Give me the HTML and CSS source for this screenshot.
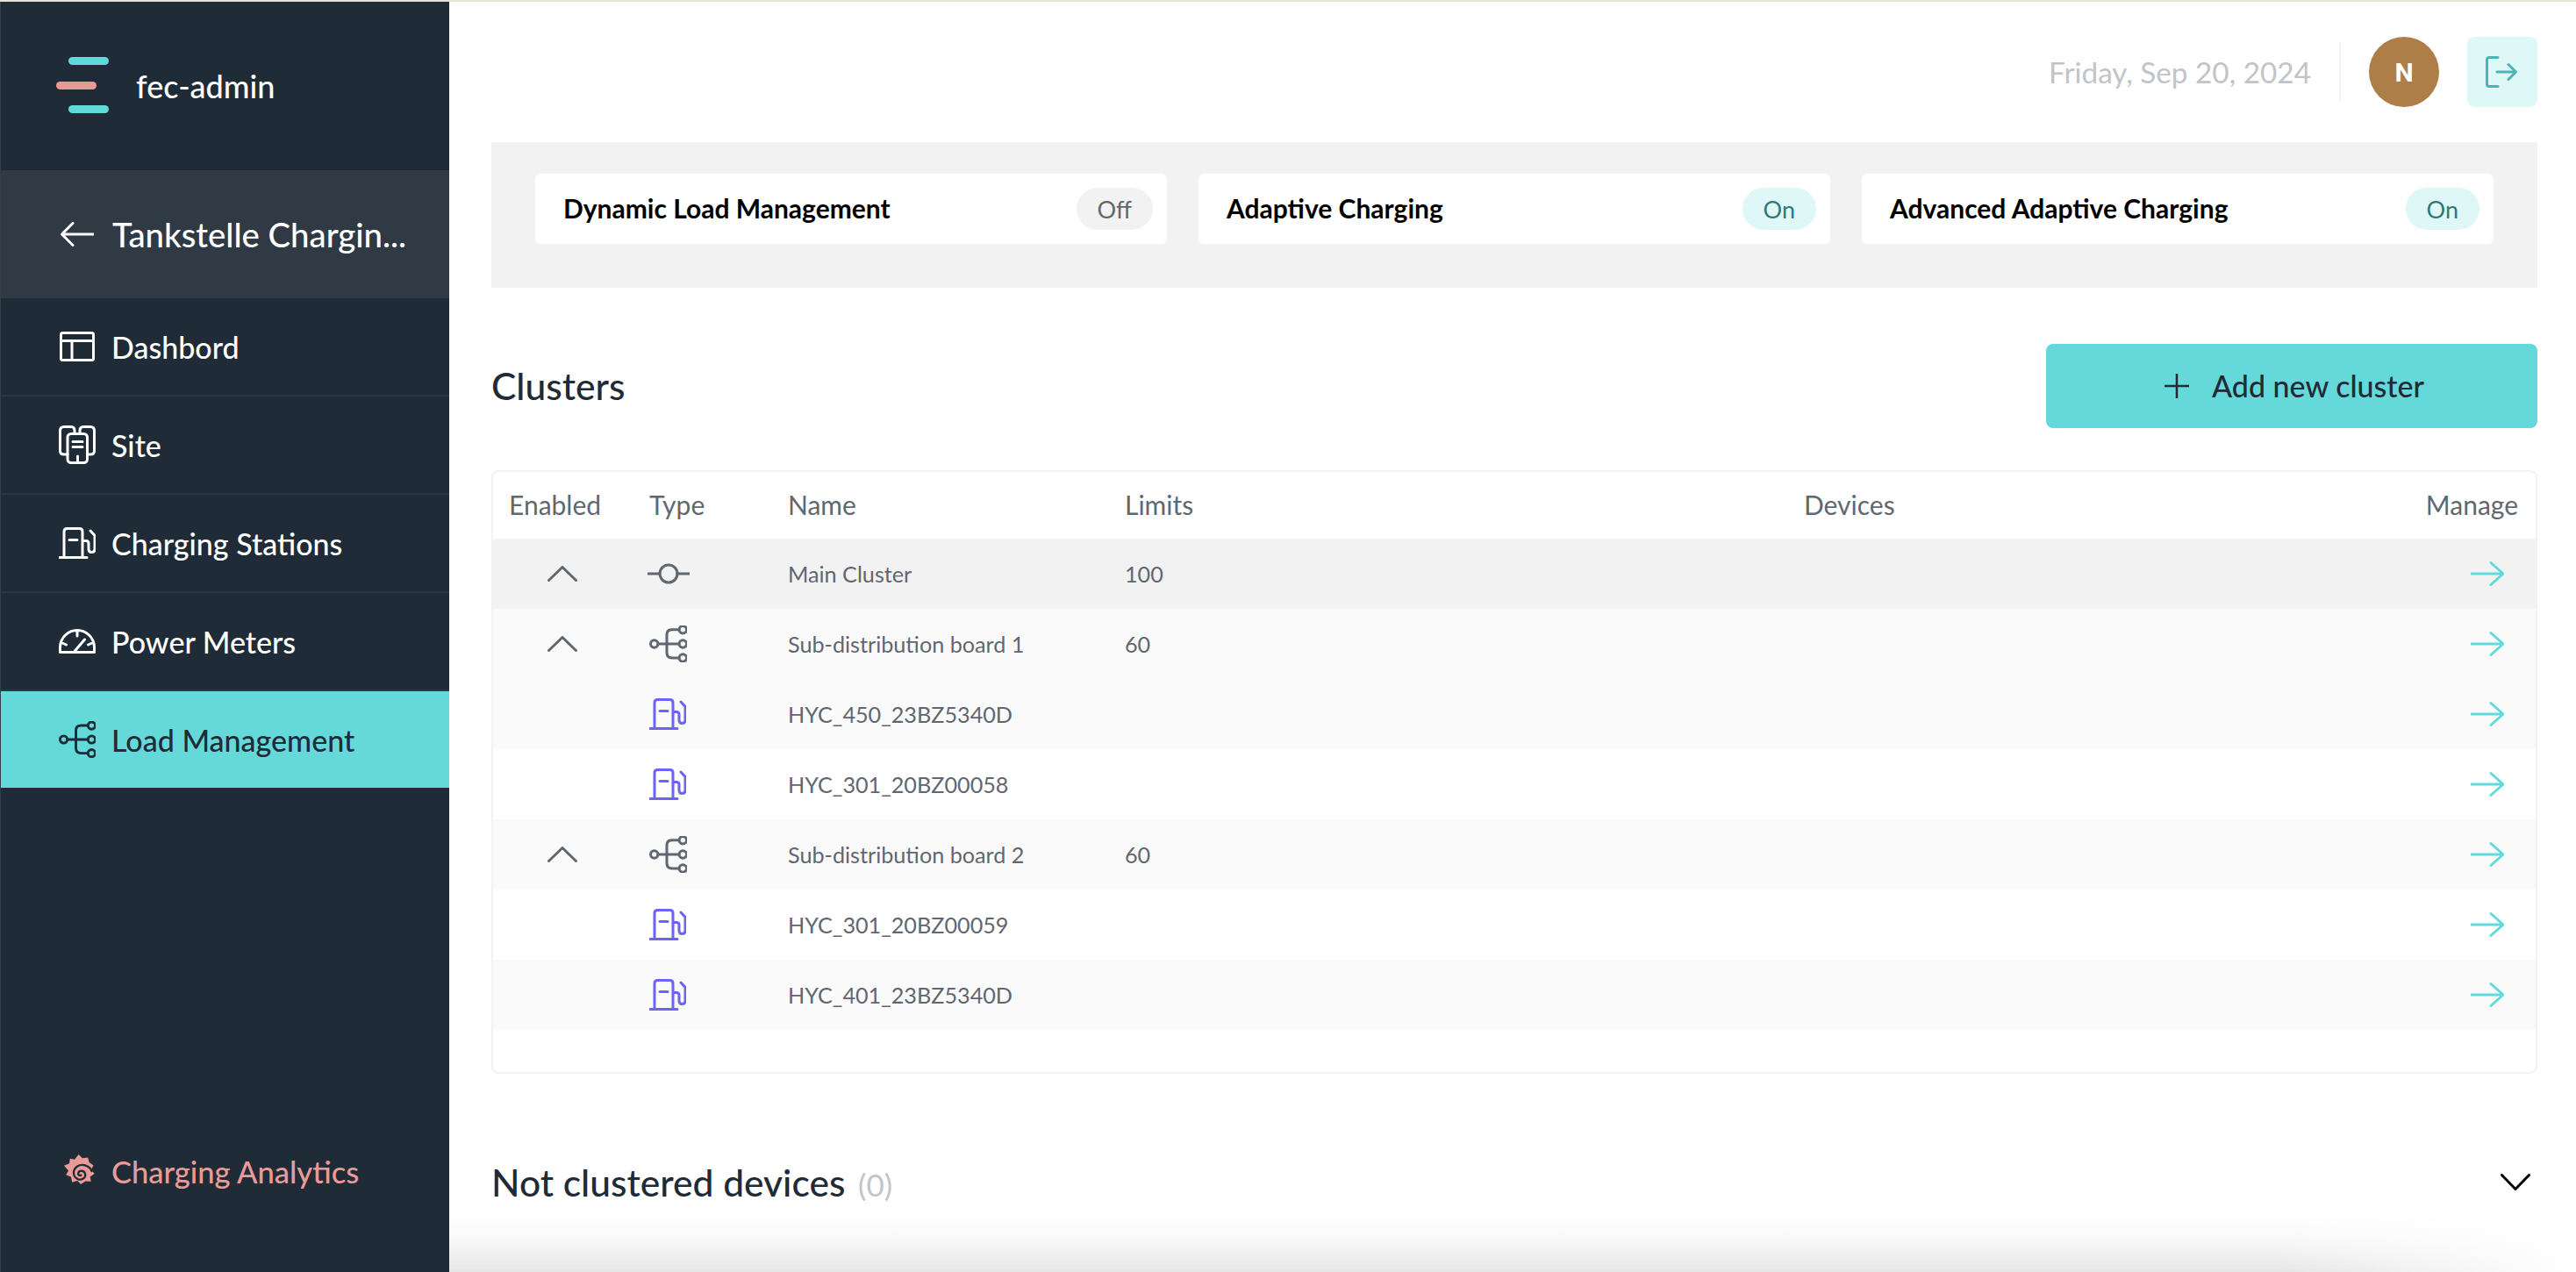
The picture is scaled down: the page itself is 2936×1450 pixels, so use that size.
FILE: index.html
```html
<!DOCTYPE html>
<html lang="en">
<head>
<meta charset="utf-8">
<title>fec-admin</title>
<link rel="stylesheet" href="styles.css">
</head>
<body>
<svg class="defs" aria-hidden="true">
  <symbol id="i-fuel" viewBox="0 0 42 36"><path d="M6 34V5Q6 1.5 9.5 1.5H23.500Q27 1.500 27 5V34M1 34.500H32M12 14.500H21M27 15.500H31Q34 15.500 34 18.500V25Q34 28.500 37.500 28.500Q41 28.500 41 25V9.500L36 4"/></symbol>
  <symbol id="i-board" viewBox="0 0 43 42"><circle cx="5.700" cy="21" r="4.200"/><circle cx="38.300" cy="4.700" r="4.200"/><circle cx="38.300" cy="21" r="4.200"/><circle cx="38.300" cy="37" r="4.200"/><path d="M10 21H34M34 4.700H26Q20 4.700 20 10.700V31Q20 37 26 37H34"/></symbol>
  <symbol id="i-node" viewBox="0 0 48 24"><circle cx="24" cy="12" r="10"/><path d="M0 12H14M34 12H48"/></symbol>
  <symbol id="i-up" viewBox="0 0 34 18"><path d="M1.500 16.500L17 1.500L32.500 16.500"/></symbol>
  <symbol id="i-go" viewBox="0 0 38 28"><path d="M0 14H37M23 1.500L37 14L23 26.500"/></symbol>
</svg>
<div class="strip"></div>
<div class="app">
  <aside class="side">
    <div class="brand">
      <svg class="logo" viewBox="0 0 60 64"><rect class="c-teal" x="14" y="0" width="46" height="9" rx="4.500"/><rect class="c-pink" x="0" y="28" width="46" height="9" rx="4.500"/><rect class="c-teal" x="14" y="55" width="46" height="9" rx="4.500"/></svg>
      <span>fec-admin</span>
    </div>
    <a class="back">
      <svg class="ic ic-back" viewBox="0 0 38 28"><path d="M38 14H2M14 1.500L1.500 14L14 26.500"/></svg>
      <span>Tankstelle Chargin...</span>
    </a>
    <nav>
      <a class="nav"><svg class="ic ic-dash" viewBox="0 0 40 34"><rect x="1.500" y="1.500" width="37" height="31" rx="2"/><path d="M1.500 10.500H38.500M14 10.500V32.500"/></svg><span>Dashbord</span></a>
      <a class="nav"><svg class="ic ic-site" viewBox="0 0 42 44"><rect x="10" y="9.500" width="22.500" height="33" rx="4"/><path d="M16 18.500H27M16 24.500H27M21.500 35V42M10 33H6Q1.500 33 1.500 29V6Q1.500 1.500 6 1.500H14Q18 1.500 18 6V9.500M32.500 33H36Q40.500 33 40.500 29V6Q40.500 1.500 36 1.500H28Q24 1.500 24 6V9.500"/></svg><span>Site</span></a>
      <a class="nav"><svg class="ic ic-fuel"><use href="#i-fuel"/></svg><span>Charging Stations</span></a>
      <a class="nav"><svg class="ic ic-gauge" viewBox="0 0 42 28"><path d="M1.500 26.500V21A19.500 19.500 0 0 1 40.500 21V26.500ZM21 2V8M3 15.500L8.500 18M39 15.500L33.500 18M17.500 26L29.500 12"/></svg><span>Power Meters</span></a>
      <a class="nav active"><svg class="ic ic-board"><use href="#i-board"/></svg><span>Load Management</span></a>
    </nav>
    <a class="analytics">
      <svg class="graf" viewBox="0 0 102 96"><path class="fill" d="M50 0L62 12L80 10L84 25L98 35L90 49L101 62L87 72L90 87L72 86L57 96L46 85L29 90L25 72L9 66L17 52L3 36L20 29L22 13L37 16Z"/><path class="hole" d="M92 54C86 36 62 28 46 38C29 49 30 74 49 80C63 84 74 74 71 62C68 51 53 50 49 59C47 65 52 69 58 67"/></svg>
      <span>Charging Analytics</span>
    </a>
  </aside>
  <main class="main">
    <header class="top">
      <span class="date">Friday, Sep 20, 2024</span>
      <i class="sep"></i>
      <span class="avatar">N</span>
      <button class="logout"><svg viewBox="0 0 36 36"><path d="M14 1.500H4Q1.500 1.500 1.500 4V32Q1.500 34.500 4 34.500H14M13 18H34.500M26 9.500L34.500 18L26 26.500"/></svg></button>
    </header>
    <section class="panel">
      <div class="card"><b>Dynamic Load Management</b><span class="pill off">Off</span></div>
      <div class="card"><b>Adaptive Charging</b><span class="pill on">On</span></div>
      <div class="card"><b>Advanced Adaptive Charging</b><span class="pill on">On</span></div>
    </section>
    <div class="head">
      <h2>Clusters</h2>
      <button class="add"><svg viewBox="0 0 28 28"><path d="M14 0V28M0 14H28"/></svg><span>Add new cluster</span></button>
    </div>
    <div class="table">
      <div class="row th"><span class="en">Enabled</span><span>Type</span><span>Name</span><span>Limits</span><span>Devices</span><span class="mg">Manage</span></div>
      <div class="row main-row">
        <svg class="up"><use href="#i-up"/></svg><svg class="t-node"><use href="#i-node"/></svg><span>Main Cluster</span><span>100</span><span></span><svg class="go"><use href="#i-go"/></svg>
      </div>
      <div class="row alt">
        <svg class="up"><use href="#i-up"/></svg><svg class="t-board"><use href="#i-board"/></svg><span>Sub-distribution board 1</span><span>60</span><span></span><svg class="go"><use href="#i-go"/></svg>
      </div>
      <div class="row alt">
        <span></span><svg class="t-fuel"><use href="#i-fuel"/></svg><span>HYC_450_23BZ5340D</span><span></span><span></span><svg class="go"><use href="#i-go"/></svg>
      </div>
      <div class="row">
        <span></span><svg class="t-fuel"><use href="#i-fuel"/></svg><span>HYC_301_20BZ00058</span><span></span><span></span><svg class="go"><use href="#i-go"/></svg>
      </div>
      <div class="row alt">
        <svg class="up"><use href="#i-up"/></svg><svg class="t-board"><use href="#i-board"/></svg><span>Sub-distribution board 2</span><span>60</span><span></span><svg class="go"><use href="#i-go"/></svg>
      </div>
      <div class="row">
        <span></span><svg class="t-fuel"><use href="#i-fuel"/></svg><span>HYC_301_20BZ00059</span><span></span><span></span><svg class="go"><use href="#i-go"/></svg>
      </div>
      <div class="row alt">
        <span></span><svg class="t-fuel"><use href="#i-fuel"/></svg><span>HYC_401_23BZ5340D</span><span></span><span></span><svg class="go"><use href="#i-go"/></svg>
      </div>
    </div>
    <div class="foot">
      <h2>Not clustered devices <small>(0)</small></h2>
      <svg class="down" viewBox="0 0 34 20"><path d="M1.500 1.500L17 17.500L32.500 1.500"/></svg>
    </div>
  </main>
</div>
</body>
</html>
```
FILE: styles.css
```css
* { box-sizing: border-box; }
html, body { margin: 0; height: 100%; overflow: hidden; background: #fff; }
body { font-family: "Lato", "Liberation Sans", sans-serif; color: #1f2b36; display: flex; flex-direction: column; }
.defs { width: 0; height: 0; position: absolute; }
svg { display: block; flex: none; fill: none; stroke: currentColor; stroke-width: 3; stroke-linecap: round; stroke-linejoin: round; }
a { display: flex; align-items: center; color: inherit; text-decoration: none; }
.strip { height: 2px; background: #e3e5d9; flex: none; }
.app { flex: 1; display: flex; min-height: 0; }

.side { width: 512px; flex: none; background: #1f2b36; color: #fff; display: flex; flex-direction: column; border-left: 1px solid #33404a; }
.brand { height: 192px; display: flex; align-items: center; padding-left: 63px; font-size: 36px; font-weight: 500; }
.brand span { margin-left: 31px; }
.logo { width: 60px; height: 64px; margin-top: -2px; stroke: none; }
.c-teal { fill: #5fd9d9; }
.c-pink { fill: #e99896; }
.back { height: 146px; background: #303a45; padding-left: 68px; font-size: 38.300px; font-weight: 500; }
.back span { margin-left: 21px; }
.ic { margin-right: 18px; }
.ic-back { width: 38px; height: 28px; margin-right: 0; }
.nav { height: 112px; padding-left: 66px; font-size: 34px; font-weight: 500; border-bottom: 2px solid #2c3742; }
.nav .ic { width: 42px; }
.ic-dash { height: 34px; }
.ic-site { height: 44px; }
.ic-fuel { height: 36px; }
.ic-gauge { height: 28px; }
.ic-board { height: 42px; }
.nav.active { background: #65d9d9; color: #1f2b36; border-bottom: 0; height: 110px; }
.analytics { margin-top: auto; height: 36px; margin-bottom: 97px; padding-left: 71px; color: #ea9a97; font-size: 34.500px; font-weight: 500; }
.graf { width: 36px; height: 34px; margin: -4px 19px 0 0; stroke: none; }
.graf .fill { fill: #ea9a97; }
.graf .hole { stroke: #1f2b36; stroke-width: 6.500; }

.main { flex: 1; min-width: 0; position: relative; padding: 0 44px 0 48px; display: flex; flex-direction: column; }
.main::after { content: ""; position: absolute; left: 0; right: 0; bottom: 0; height: 66px; background: linear-gradient(to bottom, rgba(228,228,228,0), rgba(228,228,228,.25) 45%, rgba(228,228,228,.6) 75%, #e6e6e6); -webkit-mask-image: linear-gradient(to left, transparent, #000 14%); mask-image: linear-gradient(to left, transparent, #000 14%); pointer-events: none; }
.top { height: 160px; display: flex; align-items: center; justify-content: flex-end; flex: none; }
.date { color: #c1c4c8; font-size: 33.300px; }
.sep { width: 2px; height: 68px; background: #f2f2f2; margin: 0 32px; }
.avatar { width: 80px; height: 80px; border-radius: 50%; background: #ad7e48; color: #fff; font-family: "Roboto", sans-serif; font-weight: 700; font-size: 30px; display: flex; align-items: center; justify-content: center; }
.logout { width: 80px; height: 80px; margin-left: 32px; border: 0; padding: 0; border-radius: 8px; background: #def7f7; color: #4db3b3; display: flex; align-items: center; justify-content: center; }
.logout svg { width: 36px; height: 36px; margin-left: -2px; }

.panel { flex: none; height: 166px; background: #f2f2f2; padding: 36px 50px 50px; display: grid; grid-template-columns: repeat(3, 1fr); gap: 36px; }
.card { background: #fff; border-radius: 6px; display: flex; align-items: center; justify-content: space-between; padding: 0 16px 0 32px; }
.card b { font-size: 30px; font-weight: 700; color: #000; margin-top: -2px; }
.pill { height: 48px; padding: 0 24px; border-radius: 24px; display: flex; align-items: center; justify-content: center; font-size: 27px; }
.off { background: #f2f2f2; color: #5f6770; }
.on { background: #e0f7f7; color: #2e7a7a; }

.head { flex: none; display: flex; align-items: center; justify-content: space-between; margin-top: 64px; }
.head h2 { margin-top: -2px; }
h2 { margin: 0; font-size: 42.500px; font-weight: 500; color: #1f2b36; }
.add { width: 560px; height: 96px; border: 0; border-radius: 8px; padding: 0 0 0 6px; background: #65d9d9; color: #1f2b36; display: flex; align-items: center; justify-content: center; font: 500 34px "Lato", sans-serif; }
.add span { margin-top: -2px; }
.add svg { width: 28px; height: 28px; margin-right: 26px; stroke-width: 2.500; }

.table { flex: none; height: 688px; margin-top: 48px; border: 2px solid #f2f2f2; border-radius: 8px; overflow: hidden; }
.row { height: 80px; display: grid; grid-template-columns: 178px 158px 384px 774px 1fr 140px; align-items: center; font-size: 25.200px; color: #5f6770; }
.row.th { height: 76px; font-size: 30px; padding-bottom: 2px; }
.row.th .en { padding-left: 18px; }
.row.th .mg { text-align: right; padding: 0 20px 0 0; }
.main-row { background: #f2f2f2; }
.alt { background: #fafafa; }
.up { width: 34px; height: 18px; margin-left: 62px; }
.t-node { width: 48px; height: 24px; margin-left: -2px; }
.t-board { width: 43px; height: 42px; }
.t-fuel { width: 42px; height: 36px; color: #6c63f7; }
.go { width: 38px; height: 28px; color: #62dada; justify-self: end; margin-right: 36px; }

.foot { flex: none; display: flex; align-items: center; justify-content: space-between; margin-top: 98px; }
.foot small { font-size: 35px; font-weight: 400; color: #c1c4c8; margin-left: 4px; }
.down { width: 34px; height: 20px; color: #000; margin-right: 8px; }
```
